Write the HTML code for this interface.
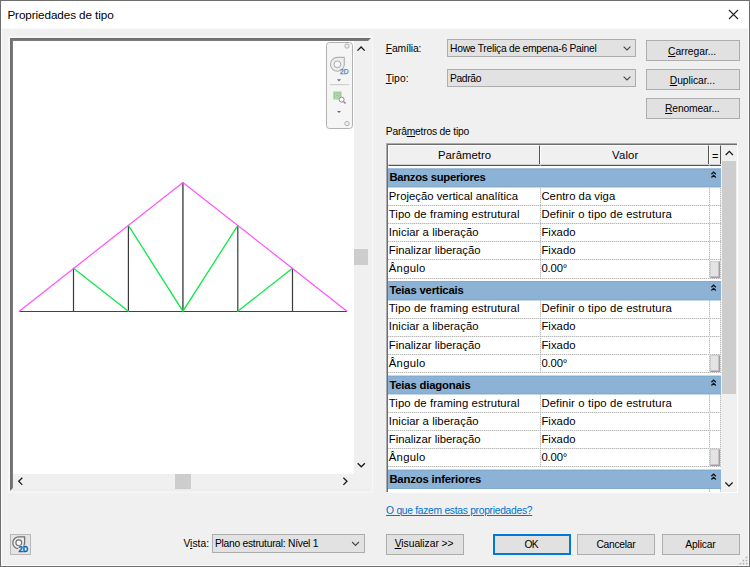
<!DOCTYPE html>
<html lang="pt-BR"><head><meta charset="utf-8"><title>Propriedades de tipo</title>
<style>html,body{margin:0;padding:0}
body{width:750px;height:567px;overflow:hidden;background:#f0f0f0;position:relative;font-family:"Liberation Sans", sans-serif;color:#000}
.a{position:absolute}
.t{position:absolute;white-space:nowrap;line-height:1;color:#000}
u{text-decoration:underline;text-underline-offset:1px;text-decoration-thickness:1px}
.btn{position:absolute;box-sizing:border-box;background:#e1e1e1;border:1px solid #adadad}
.cmb{position:absolute;box-sizing:border-box;background:#e2e2e2;border:1px solid #adadad}
.sec{position:absolute;left:388px;width:333px;background:#8cb3d6}
.gl{position:absolute;left:388px;width:333px;height:1px;background:repeating-linear-gradient(90deg,#b8b8b8 0 1px,#e4e4e4 1px 2px)}
.vl{position:absolute;width:1px;background:repeating-linear-gradient(180deg,#bcbcbc 0 1px,#e6e6e6 1px 2px)}
.sb{position:absolute;box-sizing:border-box;background:#e4e4e4;border:1px solid #cfcfcf;border-right-color:#a29ba2;border-bottom-color:#a29ba2;box-shadow:inset -1px -1px 0 #c6c0c6}
</style></head><body>
<div class="a" style="left:0;top:0;width:750px;height:567px;box-sizing:border-box;border:1px solid #6e6e6e"></div>
<div class="a" style="left:1px;top:1px;width:748px;height:565px;box-sizing:border-box;border:1px solid #fbfbfb"></div>
<div class="a" style="left:1px;top:1px;width:748px;height:27.5px;background:#fff"></div>
<div class="a" style="left:1px;top:28px;width:748px;height:1px;background:#f8f8f8"></div>
<svg class="a" style="left:726px;top:7px" width="15" height="15" viewBox="0 0 15 15"><path d="M3 3 L12 12 M12 3 L3 12" stroke="#222" stroke-width="1.1" fill="none"/></svg>
<div class="a" style="left:8px;top:36px;width:365px;height:457px;background:#f7f7f7"></div>
<div class="a" style="left:10px;top:38px;width:362px;height:454px;background:#f0f0f0"></div>
<div class="a" style="left:10px;top:38px;width:361px;height:3px;background:linear-gradient(#6c6c6c,#7c7c7c);clip-path:polygon(0 0,100% 0,358px 100%,0 100%)"></div>
<div class="a" style="left:10px;top:38px;width:3px;height:453px;background:linear-gradient(90deg,#6c6c6c,#7c7c7c);clip-path:polygon(0 0,100% 0,100% 450px,0 100%)"></div>
<div class="a" style="left:13px;top:41px;width:341px;height:433px;background:#fff"></div>
<div class="a" style="left:13px;top:489px;width:356px;height:1px;background:#eaeaea"></div>
<div class="a" style="left:354px;top:249px;width:14px;height:16px;background:#cdcdcd"></div>
<div class="a" style="left:175px;top:474px;width:16px;height:14.5px;background:#cdcdcd"></div>
<svg class="a" style="left:0;top:0" width="750" height="567" viewBox="0 0 750 567"><path d="M357.50 50.60 L361.10 47.00 L364.70 50.60" stroke="#1a1a1a" stroke-width="1.3" fill="none"/><path d="M357.70 463.20 L361.30 466.80 L364.90 463.20" stroke="#1a1a1a" stroke-width="1.3" fill="none"/><path d="M22.30 477.70 L18.70 481.30 L22.30 484.90" stroke="#1a1a1a" stroke-width="1.3" fill="none"/><path d="M343.40 477.70 L347.00 481.30 L343.40 484.90" stroke="#1a1a1a" stroke-width="1.3" fill="none"/><g fill="none" stroke-linecap="round" shape-rendering="auto"><path d="M19.3 311.45 L347.0 311.45" stroke="#2c2cff" stroke-width="1.05" stroke-linecap="butt"/><path d="M73.5 311.2 L73.5 268.3" stroke="#3a3a3a" stroke-width="1.2" stroke-linecap="butt"/><path d="M128.4 311.2 L128.4 225.4" stroke="#3a3a3a" stroke-width="1.2" stroke-linecap="butt"/><path d="M182.9 311.2 L182.9 182.5" stroke="#6e6e6e" stroke-width="1.8" stroke-linecap="butt"/><path d="M237.8 311.2 L237.8 225.4" stroke="#3a3a3a" stroke-width="1.2" stroke-linecap="butt"/><path d="M292.5 311.2 L292.5 268.3" stroke="#3a3a3a" stroke-width="1.2" stroke-linecap="butt"/><path d="M73.5 268.3 L128.4 311.2 M128.4 225.4 L182.9 311.2 L237.8 225.4 M237.8 311.2 L292.5 268.3" stroke="#10e84a" stroke-width="1.3"/><path d="M19.3 311.2 L182.9 182.5 L347.0 311.2" stroke="#ff50ff" stroke-width="1.2"/></g></svg>
<div class="a" style="left:326px;top:41.5px;width:26.5px;height:87.5px;box-sizing:border-box;background:#f5f5f5;border:1px solid #b0b0b0;border-radius:3.5px"></div>
<svg class="a" style="left:326px;top:41px" width="28" height="90" viewBox="326 41 28 90">
<circle cx="347" cy="46" r="2.2" fill="#eeeeee" stroke="#a9a9a9" stroke-width="0.9"/>
<circle cx="347" cy="123.6" r="2.2" fill="#eeeeee" stroke="#a9a9a9" stroke-width="0.9"/>
<path d="M337.4 57.4 h6.9 v7.1 a6.9 6.9 0 1 1 -6.9 -7.1 z" fill="#eceef2" stroke="#b0b0b0" stroke-width="1.1"/>
<circle cx="337.4" cy="64.3" r="3.4" fill="#f4f6f8" stroke="#aaaaaa" stroke-width="1"/>
<text x="340" y="74" font-family="Liberation Sans, sans-serif" font-size="7" fill="#2f86c8" stroke="#2f86c8" stroke-width="0.25" textLength="8.4" lengthAdjust="spacingAndGlyphs">2D</text>
<path d="M337 79.2 h4 l-2 2.2 z" fill="#6a6a6a"/>
<path d="M329.8 84.7 H349" stroke="#c8c8c8" stroke-width="1"/>
<rect x="333.2" y="91.4" width="8.4" height="8.2" fill="#aed6ac"/>
<path d="M334.5 92.5 v6 M336.5 93 h3 M336.5 95.5 h2.5 M340.4 92.5 v3" stroke="#86bc86" stroke-width="0.9" stroke-dasharray="1 1" fill="none"/>
<circle cx="341.6" cy="99.6" r="2.5" fill="#fafafa" stroke="#8e8e8e" stroke-width="1"/>
<path d="M343.4 101.4 L345.6 103.4" stroke="#8a8a8a" stroke-width="1.4"/>
<path d="M337 110.9 h4 l-2 2.2 z" fill="#6a6a6a"/>
</svg>
<div class="btn" style="left:10px;top:534px;width:21px;height:21px;background:#e4e4e4;border-color:#b8b8b8"></div>
<svg class="a" style="left:10px;top:534px" width="21" height="21" viewBox="0 0 21 21">
<path d="M8.8 2.9 h5.8 v6.1 a5.9 5.9 0 1 1 -5.8 -6.1 z" fill="#ebebeb" stroke="#707070" stroke-width="1.25"/>
<circle cx="8.8" cy="8.8" r="2.9" fill="#f8fafc" stroke="#707070" stroke-width="1.15"/>
<rect x="8.2" y="11.6" width="11" height="7" rx="2" fill="#ededed"/>
<text x="8.6" y="17.8" font-family="Liberation Sans, sans-serif" font-size="8.2" font-weight="bold" fill="#0a64b2" stroke="#0a64b2" stroke-width="0.35" textLength="9.7" lengthAdjust="spacingAndGlyphs">2D</text>
</svg>
<div class="cmb" style="left:447px;top:39px;width:189px;height:18px"></div>
<div class="cmb" style="left:447px;top:69px;width:189px;height:18px"></div>
<div class="cmb" style="left:212px;top:534px;width:153px;height:19px"></div>
<div class="btn" style="left:646px;top:40px;width:94px;height:21px"></div>
<div class="btn" style="left:646px;top:69px;width:94px;height:21px"></div>
<div class="btn" style="left:646px;top:98px;width:94px;height:21px"></div>
<div class="btn" style="left:386px;top:534px;width:78px;height:21px"></div>
<div class="btn" style="left:493px;top:534px;width:78px;height:21px;border:2px solid #0078d7"></div>
<div class="btn" style="left:577px;top:534px;width:78px;height:21px"></div>
<div class="btn" style="left:662px;top:534px;width:78px;height:21px"></div>
<svg class="a" style="left:736px;top:553px" width="12" height="12" viewBox="736 553 12 12"><rect x="746.6" y="557.5" width="1.4" height="1.4" fill="#fbfbfb"/><rect x="745.8" y="556.7" width="1.6" height="1.6" fill="#b2acb2"/><rect x="743.5" y="560.6" width="1.4" height="1.4" fill="#fbfbfb"/><rect x="742.7" y="559.8" width="1.6" height="1.6" fill="#b2acb2"/><rect x="746.6" y="560.6" width="1.4" height="1.4" fill="#fbfbfb"/><rect x="745.8" y="559.8" width="1.6" height="1.6" fill="#b2acb2"/><rect x="740.4" y="563.7" width="1.4" height="1.4" fill="#fbfbfb"/><rect x="739.6" y="562.9" width="1.6" height="1.6" fill="#b2acb2"/><rect x="743.5" y="563.7" width="1.4" height="1.4" fill="#fbfbfb"/><rect x="742.7" y="562.9" width="1.6" height="1.6" fill="#b2acb2"/><rect x="746.6" y="563.7" width="1.4" height="1.4" fill="#fbfbfb"/><rect x="745.8" y="562.9" width="1.6" height="1.6" fill="#b2acb2"/></svg>
<div class="a" style="left:386px;top:143px;width:352px;height:350px;background:#fff"></div>
<div class="a" style="left:386px;top:143px;width:351px;height:349px;background:#acacac"></div>
<div class="a" style="left:387px;top:144px;width:350px;height:348px;background:#6e6e6e"></div>
<div class="a" style="left:388px;top:145px;width:349px;height:347px;background:#fff"></div>
<div class="a" style="left:721px;top:145px;width:16px;height:347px;background:#f0f0f0"></div>
<div class="a" style="left:722px;top:161px;width:14px;height:233px;background:#cdcdcd"></div>
<div class="a" style="left:388px;top:145px;width:152px;height:21px;box-sizing:border-box;background:#f0f0f0;border-top:1px solid #fff;border-left:1px solid #fff;border-right:1px solid #555;border-bottom:1px solid #555"></div>
<div class="a" style="left:540px;top:145px;width:169px;height:21px;box-sizing:border-box;background:#f0f0f0;border-top:1px solid #fff;border-left:1px solid #fff;border-right:1px solid #555;border-bottom:1px solid #555"></div>
<div class="a" style="left:709px;top:145px;width:12px;height:21px;box-sizing:border-box;background:#f0f0f0;border-top:1px solid #fff;border-left:1px solid #fff;border-right:1px solid #555;border-bottom:1px solid #555"></div>
<div class="a" style="left:388px;top:164px;width:333px;height:1px;background:#d0d0d0"></div>
<div class="t" style="left:712px;top:151px;font-size:11px">=</div>
<div class="sec" style="top:169px;height:18px"></div>
<div class="sec" style="top:169px;height:1px;background:#82abd0"></div>
<div class="sec" style="top:186px;height:1px;background:#82abd0"></div>
<div class="sec" style="top:168px;height:1px;background:#a3c2de"></div>
<div class="sec" style="top:187px;height:1px;background:#c6d9ea"></div>
<svg class="a" style="left:709px;top:168.2px" width="10" height="16" viewBox="0 0 10 16"><path d="M2.4 6.3 L4.6 4.1 L6.8 6.3 M2.4 9.5 L4.6 7.3 L6.8 9.5" stroke="#111" stroke-width="1.3" fill="none"/></svg>
<div class="sec" style="top:281px;height:19px"></div>
<div class="sec" style="top:281px;height:1px;background:#82abd0"></div>
<div class="sec" style="top:299px;height:1px;background:#82abd0"></div>
<div class="sec" style="top:300px;height:1px;background:#c6d9ea"></div>
<svg class="a" style="left:709px;top:281px" width="10" height="16" viewBox="0 0 10 16"><path d="M2.4 6.3 L4.6 4.1 L6.8 6.3 M2.4 9.5 L4.6 7.3 L6.8 9.5" stroke="#111" stroke-width="1.3" fill="none"/></svg>
<div class="sec" style="top:376px;height:18px"></div>
<div class="sec" style="top:376px;height:1px;background:#82abd0"></div>
<div class="sec" style="top:393px;height:1px;background:#82abd0"></div>
<div class="sec" style="top:375px;height:1px;background:#c6d9ea"></div>
<div class="sec" style="top:394px;height:1px;background:#c6d9ea"></div>
<svg class="a" style="left:709px;top:375.5px" width="10" height="16" viewBox="0 0 10 16"><path d="M2.4 6.3 L4.6 4.1 L6.8 6.3 M2.4 9.5 L4.6 7.3 L6.8 9.5" stroke="#111" stroke-width="1.3" fill="none"/></svg>
<div class="sec" style="top:470px;height:19px"></div>
<div class="sec" style="top:470px;height:1px;background:#82abd0"></div>
<div class="sec" style="top:488px;height:1px;background:#82abd0"></div>
<div class="sec" style="top:469px;height:1px;background:#c6d9ea"></div>
<svg class="a" style="left:709px;top:469.5px" width="10" height="16" viewBox="0 0 10 16"><path d="M2.4 6.3 L4.6 4.1 L6.8 6.3 M2.4 9.5 L4.6 7.3 L6.8 9.5" stroke="#111" stroke-width="1.3" fill="none"/></svg>
<div class="vl" style="left:540px;top:188px;height:90px"></div>
<div class="vl" style="left:709px;top:188px;height:90px"></div>
<div class="vl" style="left:720px;top:188px;height:90px"></div>
<div class="vl" style="left:540px;top:300px;height:72px"></div>
<div class="vl" style="left:709px;top:300px;height:72px"></div>
<div class="vl" style="left:720px;top:300px;height:72px"></div>
<div class="vl" style="left:540px;top:394px;height:72px"></div>
<div class="vl" style="left:709px;top:394px;height:72px"></div>
<div class="vl" style="left:720px;top:394px;height:72px"></div>
<div class="vl" style="left:709px;top:489px;height:3px"></div><div class="vl" style="left:720px;top:489px;height:3px"></div>
<div class="gl" style="top:205px"></div>
<div class="gl" style="top:223px"></div>
<div class="gl" style="top:241px"></div>
<div class="gl" style="top:259px"></div>
<div class="gl" style="top:278px"></div>
<div class="gl" style="top:318px"></div>
<div class="gl" style="top:336px"></div>
<div class="gl" style="top:354px"></div>
<div class="gl" style="top:372px"></div>
<div class="gl" style="top:412px"></div>
<div class="gl" style="top:430px"></div>
<div class="gl" style="top:448px"></div>
<div class="gl" style="top:466px"></div>
<div class="sb" style="left:710px;top:261px;width:10px;height:17px"></div>
<div class="sb" style="left:710px;top:355px;width:10px;height:17px"></div>
<div class="sb" style="left:710px;top:449px;width:10px;height:17px"></div>
<svg class="a" style="left:0;top:0" width="750" height="567" viewBox="0 0 750 567"><path d="M725.70 155.00 L729.30 151.40 L732.90 155.00" stroke="#1a1a1a" stroke-width="1.3" fill="none"/><path d="M725.40 482.50 L729.00 486.10 L732.60 482.50" stroke="#1a1a1a" stroke-width="1.3" fill="none"/><path d="M623.60 46.60 L627.00 50.00 L630.40 46.60" stroke="#444" stroke-width="1.1" fill="none"/><path d="M623.60 76.60 L627.00 80.00 L630.40 76.60" stroke="#444" stroke-width="1.1" fill="none"/><path d="M352.10 542.00 L355.50 545.40 L358.90 542.00" stroke="#444" stroke-width="1.1" fill="none"/></svg>
<span class="t" id="title" style="left:7.40px;top:8.95px;font-size:11.7px;letter-spacing:-0.083px;color:#000">Propriedades de tipo</span>
<span class="t" id="lfam" style="left:385.80px;top:43.65px;font-size:10.3px;letter-spacing:-0.154px;"><u>F</u>amília:</span>
<span class="t" id="ltip" style="left:385.80px;top:73.65px;font-size:10.3px;letter-spacing:0.054px;"><u>T</u>ipo:</span>
<span class="t" id="lpar" style="left:385.80px;top:126.65px;font-size:10.3px;letter-spacing:-0.212px;">Parâ<u>m</u>etros de tipo</span>
<span class="t" id="c1" style="left:450.00px;top:43.65px;font-size:10.3px;letter-spacing:-0.257px;">Howe Treliça de empena-6 Painel</span>
<span class="t" id="c2" style="left:450.00px;top:73.65px;font-size:10.3px;letter-spacing:-0.367px;">Padrão</span>
<span class="t" id="b1" style="left:668.00px;top:46.65px;font-size:10.3px;letter-spacing:-0.043px;"><u>C</u>arregar...</span>
<span class="t" id="b2" style="left:669.80px;top:75.65px;font-size:10.3px;letter-spacing:-0.055px;"><u>D</u>uplicar...</span>
<span class="t" id="b3" style="left:665.00px;top:103.65px;font-size:10.3px;letter-spacing:-0.137px;"><u>R</u>enomear...</span>
<span class="t" id="lvis" style="left:183.40px;top:538.65px;font-size:10.3px;letter-spacing:0.020px;">V<u>i</u>sta:</span>
<span class="t" id="c3" style="left:214.90px;top:538.65px;font-size:10.3px;letter-spacing:-0.263px;">Plano estrutural: Nível 1</span>
<span class="t" id="link" style="left:386.10px;top:505.65px;font-size:10.3px;letter-spacing:-0.291px;color:#0072d2;text-decoration:underline;text-decoration-thickness:1px;text-underline-offset:1px">O que fazem estas propriedades?</span>
<span class="t" id="bv" style="left:394.70px;top:538.65px;font-size:10.3px;letter-spacing:-0.035px;"><u>V</u>isualizar &gt;&gt;</span>
<span class="t" id="bok" style="left:524.40px;top:539.65px;font-size:10.3px;letter-spacing:-0.695px;">OK</span>
<span class="t" id="bca" style="left:596.40px;top:539.65px;font-size:10.3px;letter-spacing:-0.277px;">Cancelar</span>
<span class="t" id="bap" style="left:685.30px;top:539.65px;font-size:10.3px;letter-spacing:-0.169px;">Aplicar</span>
<span class="t" id="hpar" style="left:438.00px;top:149.65px;font-size:11.3px;letter-spacing:0.028px;">Parâmetro</span>
<span class="t" id="hval" style="left:612.00px;top:149.65px;font-size:11.3px;letter-spacing:0.212px;">Valor</span>
<span class="t" id="s0" style="left:389.40px;top:171.65px;font-size:11.3px;letter-spacing:-0.287px;font-weight:bold">Banzos superiores</span>
<span class="t" id="r0l0" style="left:388.80px;top:190.65px;font-size:11.3px;letter-spacing:0.018px;">Projeção vertical analítica</span>
<span class="t" id="r0v0" style="left:541.40px;top:190.65px;font-size:11.3px;letter-spacing:0.023px;">Centro da viga</span>
<span class="t" id="r0l1" style="left:388.80px;top:208.65px;font-size:11.3px;letter-spacing:0.096px;">Tipo de framing estrutural</span>
<span class="t" id="r0v1" style="left:541.40px;top:208.65px;font-size:11.3px;letter-spacing:0.139px;">Definir o tipo de estrutura</span>
<span class="t" id="r0l2" style="left:388.80px;top:226.65px;font-size:11.3px;letter-spacing:0.066px;">Iniciar a liberação</span>
<span class="t" id="r0v2" style="left:541.40px;top:226.65px;font-size:11.3px;letter-spacing:0.048px;">Fixado</span>
<span class="t" id="r0l3" style="left:388.80px;top:244.65px;font-size:11.3px;letter-spacing:0.006px;">Finalizar liberação</span>
<span class="t" id="r0v3" style="left:541.40px;top:244.65px;font-size:11.3px;letter-spacing:0.048px;">Fixado</span>
<span class="t" id="r0l4" style="left:388.80px;top:262.65px;font-size:11.3px;letter-spacing:0.269px;">Ângulo</span>
<span class="t" id="r0v4" style="left:541.40px;top:262.65px;font-size:11.3px;letter-spacing:-0.142px;">0.00°</span>
<span class="t" id="s1" style="left:389.40px;top:284.65px;font-size:11.3px;letter-spacing:-0.189px;font-weight:bold">Teias verticais</span>
<span class="t" id="r1l0" style="left:388.80px;top:302.65px;font-size:11.3px;letter-spacing:0.096px;">Tipo de framing estrutural</span>
<span class="t" id="r1v0" style="left:541.40px;top:302.65px;font-size:11.3px;letter-spacing:0.139px;">Definir o tipo de estrutura</span>
<span class="t" id="r1l1" style="left:388.80px;top:320.65px;font-size:11.3px;letter-spacing:0.066px;">Iniciar a liberação</span>
<span class="t" id="r1v1" style="left:541.40px;top:320.65px;font-size:11.3px;letter-spacing:0.048px;">Fixado</span>
<span class="t" id="r1l2" style="left:388.80px;top:339.65px;font-size:11.3px;letter-spacing:0.006px;">Finalizar liberação</span>
<span class="t" id="r1v2" style="left:541.40px;top:339.65px;font-size:11.3px;letter-spacing:0.048px;">Fixado</span>
<span class="t" id="r1l3" style="left:388.80px;top:357.65px;font-size:11.3px;letter-spacing:0.269px;">Ângulo</span>
<span class="t" id="r1v3" style="left:541.40px;top:357.65px;font-size:11.3px;letter-spacing:-0.142px;">0.00°</span>
<span class="t" id="s2" style="left:389.40px;top:379.65px;font-size:11.3px;letter-spacing:-0.182px;font-weight:bold">Teias diagonais</span>
<span class="t" id="r2l0" style="left:388.80px;top:397.65px;font-size:11.3px;letter-spacing:0.096px;">Tipo de framing estrutural</span>
<span class="t" id="r2v0" style="left:541.40px;top:397.65px;font-size:11.3px;letter-spacing:0.139px;">Definir o tipo de estrutura</span>
<span class="t" id="r2l1" style="left:388.80px;top:415.65px;font-size:11.3px;letter-spacing:0.066px;">Iniciar a liberação</span>
<span class="t" id="r2v1" style="left:541.40px;top:415.65px;font-size:11.3px;letter-spacing:0.048px;">Fixado</span>
<span class="t" id="r2l2" style="left:388.80px;top:433.65px;font-size:11.3px;letter-spacing:0.006px;">Finalizar liberação</span>
<span class="t" id="r2v2" style="left:541.40px;top:433.65px;font-size:11.3px;letter-spacing:0.048px;">Fixado</span>
<span class="t" id="r2l3" style="left:388.80px;top:451.65px;font-size:11.3px;letter-spacing:0.269px;">Ângulo</span>
<span class="t" id="r2v3" style="left:541.40px;top:451.65px;font-size:11.3px;letter-spacing:-0.142px;">0.00°</span>
<span class="t" id="s3" style="left:389.40px;top:473.65px;font-size:11.3px;letter-spacing:-0.177px;font-weight:bold">Banzos inferiores</span>
</body></html>
